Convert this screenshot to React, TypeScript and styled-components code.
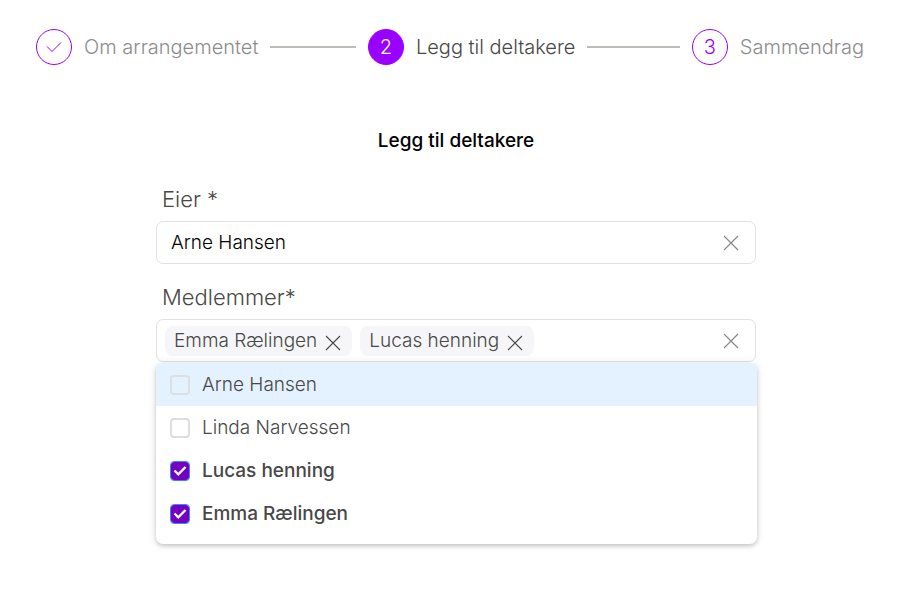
import React, { useState } from "react";
import styled, { createGlobalStyle, css } from "styled-components";

const GlobalStyle = createGlobalStyle`
  * { box-sizing: border-box; }
  body {
    margin: 0;
    background: #fff;
    color: #484848;
    font-family: Inter, "Liberation Sans", sans-serif;
    font-size: 19px;
    font-weight: 300;
    line-height: 24px;
  }
  button, input { font: inherit; color: inherit; }
`;

type StepState = "done" | "current" | "upcoming";

const Page = styled.div`
  min-height: 100vh;
  padding: 29px 40px 40px 36px;
`;

const Stepper = styled.ol`
  display: grid;
  grid-template-columns: 41fr 40fr auto;
  margin: 0;
  padding: 0;
  list-style: none;
  font-size: 20px;
`;

const Step = styled.li<{ $state: StepState }>`
  display: flex;
  align-items: center;
  gap: 12px;
  padding-right: 12px;
  white-space: nowrap;
  color: ${(p) => (p.$state === "current" ? "#484848" : "#8c8c8e")};

  &:last-child {
    padding-right: 0;
  }
  &:not(:last-child)::after {
    content: "";
    flex: 1;
    height: 2px;
    background: #bdbcb6;
  }
`;

const StepBadge = styled.span<{ $state: StepState }>`
  display: flex;
  flex: none;
  align-items: center;
  justify-content: center;
  width: 36px;
  height: 36px;
  border: 1px solid #9a00ff;
  border-radius: 50%;
  color: #9a00ff;
  ${(p) =>
    p.$state === "current" &&
    css`
      background: #9a00ff;
      color: #fff;
    `}
`;

const Form = styled.form`
  display: flex;
  flex-direction: column;
  max-width: 612px;
  margin: 62px auto 0;
  padding-left: 12px;
`;

const Title = styled.h1`
  margin: 0;
  color: #000;
  font-size: 19px;
  font-weight: 500;
  line-height: 28px;
  text-align: center;
`;

const Label = styled.label`
  margin-top: 30px;
  padding-left: 6px;
  font-size: 22px;
  line-height: 28px;
`;

const MemberLabel = styled(Label)`
  margin-top: 19px;
`;

const Control = styled.div`
  position: relative;
  display: flex;
  align-items: center;
  gap: 8px;
  min-height: 43px;
  margin-top: 8px;
  padding: 0 16px 0 8px;
  border: 1px solid #e2e2e2;
  border-radius: 7px;
`;

const TextInput = styled.input`
  flex: 1;
  min-width: 0;
  padding: 0 6px;
  border: 0;
  outline: 0;
  background: transparent;
  color: #000;
`;

const Tag = styled.span`
  display: flex;
  align-items: center;
  gap: 8px;
  height: 30px;
  padding: 0 11px 0 9px;
  border-radius: 8px;
  background: #f6f6f8;
  white-space: nowrap;
`;

const IconButton = styled.button<{ $muted?: boolean }>`
  display: flex;
  flex: none;
  padding: 0;
  border: 0;
  background: none;
  color: ${(p) => (p.$muted ? "#858585" : "#484848")};
  cursor: pointer;
`;

const Menu = styled.ul`
  position: absolute;
  z-index: 1;
  top: 100%;
  left: -1px;
  right: -2px;
  margin: 2px 0 0;
  padding: 0 0 9px;
  overflow: hidden;
  border-radius: 7px;
  background: #fff;
  box-shadow: 0 2px 4px rgba(0, 0, 0, 0.2), 0 0 12px rgba(0, 0, 0, 0.08);
  list-style: none;
`;

const Option = styled.label<{ $active: boolean; $checked: boolean }>`
  display: flex;
  align-items: center;
  gap: 12px;
  height: 43px;
  padding: 0 14px;
  background: ${(p) => (p.$active ? "#e4f2ff" : "transparent")};
  font-weight: ${(p) => (p.$checked ? 500 : 300)};
  cursor: pointer;
`;

const CheckCell = styled.span`
  display: grid;
  flex: none;
  width: 20px;
  height: 20px;

  > * {
    grid-area: 1 / 1;
  }
  svg {
    pointer-events: none;
  }
`;

const Checkbox = styled.input`
  appearance: none;
  width: 20px;
  height: 20px;
  margin: 0;
  border: 2px solid #dedede;
  border-radius: 4px;

  &:checked {
    border: 1px solid #2f8cff;
    background: #7500c0;
    background-clip: padding-box;
  }
`;

function Cross() {
  return (
    <svg width="16" height="16" viewBox="0 0 16 16" fill="none" stroke="currentColor" strokeWidth="1.1" aria-hidden="true">
      <path d="M1 1 15 15M15 1 1 15" />
    </svg>
  );
}

const CrossInTag = styled.span`
  display: flex;
  padding-top: 4px;
`;

const steps: { label: string; state: StepState }[] = [
  { label: "Om arrangementet", state: "done" },
  { label: "Legg til deltakere", state: "current" },
  { label: "Sammendrag", state: "upcoming" },
];

const people = ["Arne Hansen", "Linda Narvessen", "Lucas henning", "Emma Rælingen"];

export default function App() {
  const [owner, setOwner] = useState("Arne Hansen");
  const [members, setMembers] = useState(["Emma Rælingen", "Lucas henning"]);
  const [active, setActive] = useState("Arne Hansen");

  const toggle = (name: string) =>
    setMembers((list) => (list.includes(name) ? list.filter((m) => m !== name) : [...list, name]));

  return (
    <Page>
      <GlobalStyle />
      <Stepper>
        {steps.map((step, i) => (
          <Step key={step.label} $state={step.state} aria-current={step.state === "current" ? "step" : undefined}>
            <StepBadge $state={step.state}>
              {step.state === "done" ? (
                <svg width="16" height="12" viewBox="0 0 16 12" fill="none" stroke="currentColor" aria-hidden="true">
                  <path d="M1 5.5 6 10.5 15 1.5" />
                </svg>
              ) : (
                i + 1
              )}
            </StepBadge>
            {step.label}
          </Step>
        ))}
      </Stepper>

      <Form onSubmit={(e) => e.preventDefault()}>
        <Title>Legg til deltakere</Title>

        <Label htmlFor="owner">Eier *</Label>
        <Control>
          <TextInput id="owner" value={owner} onChange={(e) => setOwner(e.target.value)} />
          <IconButton type="button" $muted aria-label="Fjern eier" onClick={() => setOwner("")}>
            <Cross />
          </IconButton>
        </Control>

        <MemberLabel htmlFor="members">Medlemmer*</MemberLabel>
        <Control>
          {members.map((name) => (
            <Tag key={name}>
              {name}
              <CrossInTag>
                <IconButton type="button" aria-label={`Fjern ${name}`} onClick={() => toggle(name)}>
                  <Cross />
                </IconButton>
              </CrossInTag>
            </Tag>
          ))}
          <TextInput id="members" autoComplete="off" />
          <IconButton type="button" $muted aria-label="Fjern alle medlemmer" onClick={() => setMembers([])}>
            <Cross />
          </IconButton>
          <Menu>
            {people.map((name) => (
              <li key={name} onMouseEnter={() => setActive(name)}>
                <Option $active={active === name} $checked={members.includes(name)}>
                  <CheckCell>
                    <Checkbox type="checkbox" checked={members.includes(name)} onChange={() => toggle(name)} />
                    {members.includes(name) && (
                      <svg width="20" height="20" viewBox="0 0 20 20" fill="none" stroke="#fff" strokeWidth="2.4" aria-hidden="true">
                        <path d="M4.5 9.5 8.3 13.3 15.5 6" />
                      </svg>
                    )}
                  </CheckCell>
                  {name}
                </Option>
              </li>
            ))}
          </Menu>
        </Control>
      </Form>
    </Page>
  );
}
